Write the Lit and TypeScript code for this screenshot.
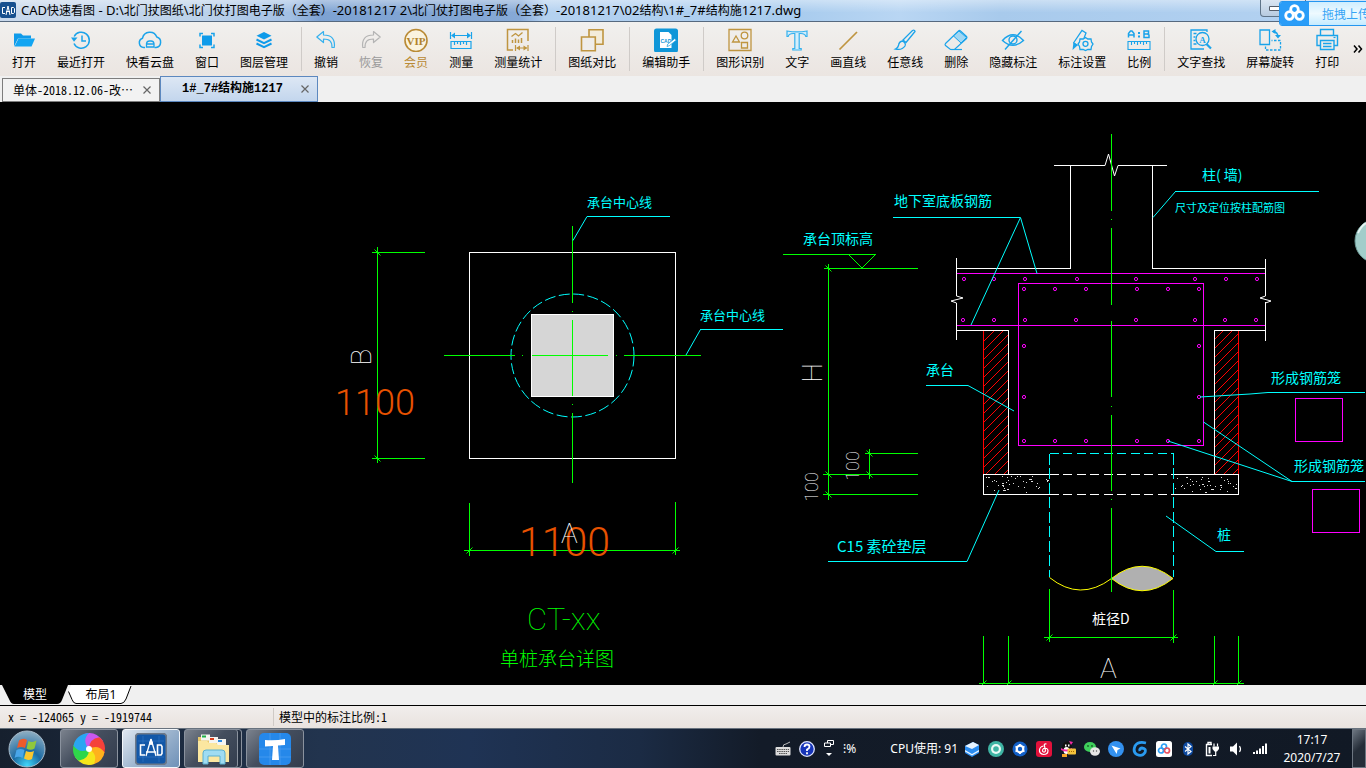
import { LitElement, html, svg, css, TemplateResult, SVGTemplateResult } from "lit";
import { customElement } from "lit/decorators.js";

type Glyph = SVGTemplateResult;

/* ---------- toolbar icons, drawn on a 24 x 24 grid ---------- */
const BLUE = "#1aa3ea";
const GOLD = "#bf9540";

const I: Record<string, Glyph> = {
  open: svg`<path d="M2 5.500h7l2 2h8v3H6l-4 8z" fill="#0f9bea"/><path d="M6.500 10.500H23l-3.500 8H2.500z" fill="#12a5f2"/>`,
  recent: svg`<g fill="none" stroke="${BLUE}" stroke-width="1.500"><path d="M5.200 8.500A8 8 0 1 1 5 15.500"/><path d="M13 7.500v5.500h4"/></g><path d="M2 9.500h6.500L5 13.800z" fill="${BLUE}"/>`,
  cloud: svg`<path d="M7 19.500H5.800A4.800 4.800 0 0 1 4.500 10.200 7.500 7.500 0 0 1 18.800 9 5.400 5.400 0 0 1 18 19.500h-1.500" fill="none" stroke="${BLUE}" stroke-width="1.500"/><path d="M8.500 19v-3.500a3 3 0 0 1 3-2.500h1.500a3 3 0 0 1 3 2.500V19zM8.500 16h7.500" fill="none" stroke="${BLUE}" stroke-width="1.300"/>`,
  window: svg`<rect x="7" y="7.500" width="10" height="10" fill="#0f9bea"/><path d="M5 8.500V5.500h3M16 5.500h3v3M19 16.500v3h-3M8 19.500H5v-3" fill="none" stroke="${BLUE}" stroke-width="1.500"/>`,
  layers: svg`<path d="M12 4l7.500 3.700L12 11.400 4.500 7.700z" fill="#0f9bea"/><path d="M4.500 11.500L12 15.200l7.500-3.700M4.500 15.500L12 19.200l7.500-3.700" fill="none" stroke="#0f9bea" stroke-width="2"/>`,
  undo: svg`<path d="M9.500 3.500L2.800 9l6.700 5.500V11c6 0 8.500 2 8.500 8.500h2.200C21.500 11 17.500 7 9.500 7z" fill="none" stroke="#35b1ee" stroke-width="1.200" stroke-linejoin="round"/>`,
  redo: svg`<path d="M14.500 3.500L21.200 9l-6.700 5.500V11c-6 0-8.500 2-8.500 8.500H3.800C2.500 11 6.500 7 14.500 7z" fill="none" stroke="#b4b4b4" stroke-width="1.200" stroke-linejoin="round"/>`,
  vip: svg`<circle cx="12" cy="12.500" r="11" fill="#faf3df" stroke="#b98a35" stroke-width="1.600"/><text x="12" y="16.500" text-anchor="middle" font-family="Liberation Serif, serif" font-weight="700" font-size="11" fill="#b0822c">VIP</text>`,
  measure: svg`<g fill="none" stroke="${BLUE}" stroke-width="1.200"><path d="M1.500 4v7M22.500 4v7M3 7.500h18"/><path d="M2 13.500h20v7H2zM5.500 14v3M8.500 14v2M11.500 14v3M14.500 14v2M17.500 14v3"/></g><path d="M2 7.500l4-3v6zM22 7.500l-4-3v6z" fill="${BLUE}"/>`,
  stats: svg`<g fill="none" stroke="${GOLD}" stroke-width="1.500"><path d="M22 13V1.500H1.500v20.500H7"/><path d="M5.500 8.500l4-3 3 2.500 4-3.500" stroke-width="1.300"/><path d="M6.500 15v-3M9.500 15v-4.500M12.500 15v-3.500M15.500 15v-5"/><path d="M9.500 17v6M22 17v6M11 20h9.500" stroke-width="1.200"/></g><path d="M10 20l4-2.500v5zM21.500 20l-4-2.500v5z" fill="${GOLD}"/>`,
  compare: svg`<g fill="#f3ecda" stroke="${GOLD}" stroke-width="1.600"><path d="M9 1.800h14v14.400H9z"/><path d="M1.500 9h13.800v13.700H1.500z" fill="#efedea"/></g>`,
  editor: svg`<rect width="24" height="24" y=".5" rx="2.500" fill="#0f96d8"/><path d="M6 4h8.500l3 3v13H6z" fill="#fff"/><text x="6.500" y="14.500" font-family="Liberation Sans, sans-serif" font-weight="700" font-size="5" fill="#0f96d8">CAD</text><path d="M13 18.500l.8-2.500 7-5.500 1.500 1.700-7 5.500z" fill="#fff" stroke="#0f96d8" stroke-width=".7"/>`,
  shapes: svg`<g fill="none" stroke="${GOLD}" stroke-width="1.300"><path d="M1 1.500h22v21H1z"/><path d="M8 8l3.500 6h-7z"/><circle cx="16.500" cy="7.500" r="3.300"/><path d="M13.500 14.500h6v5.500h-6z"/></g>`,
  text: svg`<path d="M2 3q10 1.800 20 0v5.500h-1.200q-.5-3-5-3h-1.600V20.500h2V22H7.800v-1.500h2V5.500H8.200q-4.500 0-5 3H2z" fill="#d4eefb" stroke="#35b1ee" stroke-width="1.200"/>`,
  line: svg`<path d="M3.500 21.500L21 4" stroke="${GOLD}" stroke-width="1.700"/>`,
  brush: svg`<g fill="none" stroke="${BLUE}" stroke-width="1.300"><path d="M10 12L19.500 2.500q2-1 2.500 1L13 14.500z"/><path d="M9.500 13q-3.500.5-4 4.500-.5 2.500-3 3.500 6.500 1.500 9.500-3 1-2-.5-3.500z"/></g>`,
  erase: svg`<path d="M1.500 15.500L14.500 3q1-1 2 0l6 5.500q.8.900 0 2L10.500 21.500h-4L1.500 17.500q-.8-1 0-2z" fill="none" stroke="${BLUE}" stroke-width="1.200"/><path d="M9.500 8l5.500-5 7.500 6.500L17 15z" fill="#9fd7f4" stroke="${BLUE}" stroke-width="1"/><path d="M7 21.500h11" stroke="${BLUE}" stroke-width="1.200"/>`,
  hide: svg`<g fill="none" stroke="${BLUE}" stroke-width="1.400"><path d="M1.500 12.500Q12 1 22.500 12.500 12 22 1.500 12.500z"/><circle cx="12" cy="12" r="4"/><path d="M4 21.500L20.500 3"/></g>`,
  annot: svg`<path d="M3.500 15L12 2.500l4 2.500-2 5M3.500 15l3.800 2.500" fill="none" stroke="${BLUE}" stroke-width="1.300"/><path d="M3.500 14l4.500 3-5.500 5z" fill="${BLUE}"/><g fill="#eeedea" stroke="${BLUE}" stroke-width="1.300"><path d="M15.500 9.500l2.300 1.500h3.200l.5 3 1.500 2-1.500 2.500-.5 3h-3.200l-2.300 1-2.300-1H10l-.5-3L8 16l1.500-2 .5-3h3.200z"/><circle cx="15.500" cy="15.800" r="2.500"/></g>`,
  ratio: svg`<g fill="none" stroke="${BLUE}"><path d="M1.500 9.500V5.500l2-2.500h1.500l2 2.500v4M2 7h5M17 3h4.500v2.500L20.500 6l1.500 1v2.500H17zM17 6h4" stroke-width="1.500"/><path d="M1 13.500h22v8H1zM4.500 14v3M7.500 14v2M10.500 14v3M13.500 14v2M16.500 14v3M19.500 14v2" stroke-width="1.100"/></g><path d="M11 4h2v2h-2zM11 7.500h2v2h-2z" fill="${BLUE}"/>`,
  find: svg`<g fill="none" stroke="${BLUE}" stroke-width="1.300"><path d="M18 4V2H2v19h13M4.500 5.500h3M4.500 9h2M4.500 12.500h2M4.500 16h3"/><circle cx="13.500" cy="11" r="6.500"/></g><path d="M17.500 16l4.500 4.500" stroke="${BLUE}" stroke-width="2.200"/><text x="13.500" y="14.500" text-anchor="middle" font-family="Liberation Serif, serif" font-weight="700" font-size="9" fill="${BLUE}">A</text>`,
  rotate: svg`<g fill="none" stroke="${BLUE}" stroke-width="1.300"><path d="M2 2h9.500v14.500H2z"/><path d="M7.500 18.500v3.500H22.500V12.500h-9" stroke-dasharray="2.500 1.500"/><path d="M15 3.500q5 .5 5 5.500" /></g><path d="M13.500 3.500l4-2.500v5zM17 7h6l-3 3.500z" fill="${BLUE}"/>`,
  print: svg`<g fill="none" stroke="${BLUE}" stroke-width="1.400"><path d="M5.500 7V1.500h13V7"/><path d="M5.500 17.500H2V7.500h20.500v10H19"/><path d="M5.500 12.500h13.500v9H5.500zM8 15.500h8.500M8 18.500h8.500" fill="#eeedea"/></g><path d="M18.500 9.500h2" stroke="${BLUE}" stroke-width="1.200"/>`,
};

type Tool = [string, string] | "|";
const TOOLS: Tool[] = [
  ["open", "打开"], ["recent", "最近打开"], ["cloud", "快看云盘"], ["window", "窗口"], ["layers", "图层管理"], "|",
  ["undo", "撤销"], ["redo", "恢复"], ["vip", "会员"], ["measure", "测量"], ["stats", "测量统计"], "|",
  ["compare", "图纸对比"], "|",
  ["editor", "编辑助手"], "|",
  ["shapes", "图形识别"], ["text", "文字"], ["line", "画直线"], ["brush", "任意线"], ["erase", "删除"], ["hide", "隐藏标注"], ["annot", "标注设置"], ["ratio", "比例"], "|",
  ["find", "文字查找"], ["rotate", "屏幕旋转"], ["print", "打印"],
];

const icon = (name: string, size = 24): TemplateResult =>
  html`<svg width=${size} height=${size} viewBox="0 0 24 24" aria-hidden="true">${I[name]}</svg>`;

const TITLE = "CAD快速看图 - D:\\北门扙图纸\\北门仗打图电子版（全套）-20181217 2\\北门仗打图电子版（全套）-20181217\\02结构\\1#_7#结构施1217.dwg";

/* Latin runs are set one size up from the Chinese around them. */
const mixed = (s: string) =>
  s.split(/([\x20-\x7e]+)/).map((run) => (/^[\x20-\x7e]/.test(run) ? html`<span class="latin">${run}</span>` : run));

/* ---------- the drawing ---------- */
@customElement("cad-sheet")
export class CadSheet extends LitElement {
  static styles = css`
    :host { display: block; flex: 1; min-height: 0; background: #000; overflow: hidden; }
    svg { display: block; width: 100%; height: 100%; }
    .ln { fill: none; shape-rendering: crispEdges; stroke-width: 1; }
    .soft { fill: none; stroke-width: 1; }
    .plate { fill: #d6d6d6; }
    .cut { fill: #b0b0b0; }
    .g { stroke: #0f0; } .c { stroke: #0ff; } .w { stroke: #fff; } .m { stroke: #f0f; } .r { stroke: #f00; } .y { stroke: #ff0; }
    text { font-family: "Noto Sans CJK SC", sans-serif; font-weight: 400; }
    .tc { fill: #0ff; } .tg { fill: #0f0; } .tw { fill: #fff; } .to { fill: #e85200; }
    .thin { font-family: Roboto, "Noto Sans CJK SC", sans-serif; font-weight: 100; }
    .light { font-family: Roboto, "Noto Sans CJK SC", sans-serif; font-weight: 300; }
    .s11 { font-size: 11px; } .s13 { font-size: 13px; } .s14 { font-size: 14px; } .s15 { font-size: 15px; } .s18 { font-size: 18px; }
    .s19 { font-size: 19px; font-weight: 300; } .s28 { font-size: 28px; } .s31 { font-size: 31px; } .s36 { font-size: 36px; } .s41 { font-size: 41px; }
  `;

  private t(x: number, y: number, cls: string, s: string) {
    return svg`<text x=${x} y=${y} class=${cls}>${s}</text>`;
  }
  private v(x: number, y: number, cls: string, s: string) {
    return svg`<text x="0" y="0" text-anchor="middle" class=${cls} transform=${`translate(${x} ${y}) rotate(-90)`}>${s}</text>`;
  }
  private ticks(points: number[][], dir: number) {
    return points.map(([x, y]) => svg`<path class="soft g" d=${`M${x - 3} ${y + 3 * dir}L${x + 3} ${y - 3 * dir}`}/>`);
  }
  private hatch(x: number) {
    const out = [];
    for (let y = 341; y < 505; y += 9) out.push(svg`<path d=${`M${x} ${y}l32 -32`}/>`);
    return out;
  }
  private bars() {
    const rows: [number, number[]][] = [
      [279, [964, 994, 1025, 1077, 1136, 1195, 1226, 1257]],
      [289, [1024, 1055, 1086, 1137, 1168, 1199]],
      [320, [963, 994, 1025, 1076, 1136, 1195, 1225, 1256]],
      [346, [1024, 1199]],
      [397, [1024, 1199]],
      [441, [1024, 1055, 1086, 1137, 1168, 1199]],
    ];
    return rows.map(([y, xs]) => xs.map((x) => svg`<circle cx=${x} cy=${y} r="1.600"/>`));
  }
  private gravel(x0: number) {
    const out = [];
    let seed = x0;
    const next = (n: number) => {
      seed = (seed * 1103 + 12345) % 65521;
      return seed % n;
    };
    for (let i = 0; i < 42; i++) {
      out.push(svg`<rect x=${x0 + next(62)} y=${476 + next(17)} width=${i % 6 === 0 ? 2 : 1} height="1"/>`);
    }
    return out;
  }

  render() {
    return html`<svg viewBox="0 102 1366 583" preserveAspectRatio="xMinYMin slice" role="img" aria-label="单桩承台详图">
      <defs>
        <clipPath id="wl"><rect x="984" y="331" width="24" height="143"/></clipPath>
        <clipPath id="wr"><rect x="1215" y="331" width="23" height="143"/></clipPath>
      </defs>

      <rect x="531.500" y="314.500" width="82" height="82" class="ln w plate"/>
      <path class="ln w" d="M469.500 252.500H675.500V458.500H469.500z"/>
      <circle class="soft c" cx="572.500" cy="355.500" r="61.500" stroke-dasharray="11 3.500"/>
      <path class="ln g" d="M572.500 226V303M572.500 311v1M572.500 320V396M572.500 404v1M572.500 413V483
        M444 355.500H515M522 355.500h1M532 355.500H608M616 355.500h1M624 355.500H701
        M377.500 247V463M372 252.500H425M372 458.500H425
        M464 550.500H680M469.500 503V556M675.500 502V555"/>
      ${this.ticks([[377.5, 252.5], [377.5, 458.5]], -1)}
      ${this.ticks([[469.5, 550.5], [675.5, 550.5]], 1)}
      <path class="ln c" d="M587 216.500H670M700 329.500H783"/>
      <path class="soft c" d="M573 240.500L587 216.500M686 355L700.500 329.500"/>
      ${this.t(587, 207, "tc s13", "承台中心线")}
      ${this.t(700, 320, "tc s13", "承台中心线")}
      ${this.v(371, 357, "tw s28 thin", "B")}
      ${this.t(335, 415, "to s36 light", "1100")}
      ${this.t(519, 556, "to s41 light", "1100")}
      ${this.t(561, 543, "tw s28 thin", "A")}
      ${this.t(527, 630, "tg s31 thin", "CT-xx")}
      ${this.t(500, 666, "tg s19", "单桩承台详图")}

      <path class="ln g" d="M783 254.500H876M824 268.500H918M828.500 264V500M823 474.500H918M823 494.500H918M869.500 449V479M865 453.500H918
        M1044 637.500H1178M1049.500 589V642M1173.500 590V643M979 683.500H1244M983.500 636V684M1008.500 636V684M1214.500 636V684M1238.500 636V684"/>
      <path class="soft g" d="M848.500 254.500L862 268L875.500 254.500"/>
      ${this.ticks([[828.5, 268.5], [828.5, 474.5], [828.5, 494.5], [869.5, 453.5], [869.5, 474.5]], -1)}
      ${this.ticks([[1049.5, 637.5], [1173.5, 637.5], [983.5, 683.5], [1008.5, 683.5], [1214.5, 683.5], [1238.5, 683.5]], 1)}

      <g clip-path="url(#wl)" class="soft r">${this.hatch(984)}</g>
      <g clip-path="url(#wr)" class="soft r">${this.hatch(1213)}</g>
      <path class="ln r" d="M983.500 331V474M1238.500 331V474"/>

      <path class="ln m" d="M957 273.500H1265M957 325.500H1265M1018.500 283.500H1203.500V445.500H1018.500z
        M1295.500 398.500H1342.500V441.500H1295.500zM1312.500 489.500H1359.500V532.500H1312.500z"/>
      <g class="soft m">${this.bars()}</g>

      <path class="ln w" d="M1054 165.500H1105M1118 165.500H1167M1070.500 165V268.500H956M1152.500 165V268.500H1265
        M956.500 258V296M956.500 303V340M1265.500 259V296M1265.500 302V341M956 330.500H1008.500V474M1265 330.500H1214.500V474
        M1059 474.500H983.500V494.500H1059M1173 474.500H1238.500V494.500H1173"/>
      <path class="ln w" stroke-dasharray="9 4.500" d="M1063 474.500H1173M1063 494.500H1173"/>
      <path class="soft w" d="M1105 165.500L1108.500 154L1114.500 176L1118 165.500M956.500 296L963 298L951 301L956.500 303M1265.500 296L1260 298L1271 301L1265.500 303"/>
      <g fill="#ddd">${this.gravel(986)}${this.gravel(1175)}</g>

      <path class="ln c" stroke-dasharray="9 4.500" d="M1049.500 453.500H1173.500"/>
      <path class="ln c" stroke-dasharray="11 3.500" d="M1049.500 453.500V577M1173.500 453.500V577"/>
      <path class="soft y cut" d="M1111.500 578.500Q1142 554 1173 578.500Q1142 603 1111.500 578.500z"/>
      <path class="soft y" d="M1049.500 577.500Q1080 602 1111.500 578.500"/>
      <path class="ln g" d="M1111.500 134V211M1111.500 219v1M1111.500 228V305M1111.500 321V397M1111.500 406v1M1111.500 415V491M1111.500 499v1M1111.500 508V592"/>

      <path class="ln c" d="M893 217.500H1020M1175 191.500H1319M926 385.500H968M828 561.500H967M1268 392.500H1365M1292 481.500H1365M1216 551.500H1244"/>
      <path class="soft c" d="M971 325L1020.500 217.500L1037 273.500M1153 217.500L1175.500 191.500M968 385.500L1014 411M967 561.500L999 490
        M1200 397L1250 394L1268 392.500M1203.500 422L1292 481.500L1168 441M1166 516L1216 551.500"/>

      ${this.t(803, 244, "tc s14", "承台顶标高")}
      ${this.t(894, 206, "tc s14", "地下室底板钢筋")}
      ${this.t(1202, 180, "tc s14", "柱( 墙)")}
      ${this.t(1175, 212, "tc s11", "尺寸及定位按柱配筋图")}
      ${this.t(926, 375, "tc s14", "承台")}
      ${this.t(837, 552, "tc s15", "C15 素砼垫层")}
      ${this.t(1271, 383, "tc s14", "形成钢筋笼")}
      ${this.t(1294, 471, "tc s14", "形成钢筋笼")}
      ${this.t(1217, 540, "tc s14", "桩")}
      ${this.t(1092, 624, "tw s14", "桩径D")}
      ${this.t(1100, 678, "tw s28 thin", "A")}
      ${this.v(822, 373, "tw s28 thin", "H")}
      ${this.v(818, 487, "tw s18 thin", "100")}
      ${this.v(859, 466, "tw s18 thin", "100")}

      <circle cx="1377" cy="241" r="22" fill="#a2cdca" stroke="#6f9c98"/>
      <path d="M1358 233q3-7 8-10" fill="none" stroke="#e4f3f1" stroke-width="2"/>
    </svg>`;
  }
}

/* ---------- taskbar ---------- */
const TRAY: [string, Glyph][] = [
  ["图层", svg`<path d="M1 5l8-4 6 3v8l-7 4-7-4z" fill="#2a8cf0"/><path d="M1 5l8-4 6 3-7 4zM1 9l7 4 7-4v1.500l-7 4-7-4z" fill="#e8f4ff"/>`],
  ["护眼", svg`<circle cx="8" cy="8" r="8" fill="#3fb5a4"/><circle cx="8" cy="8" r="5" fill="#eafaf6"/><circle cx="8" cy="8" r="2.800" fill="#3fb5a4"/>`],
  ["设置", svg`<circle cx="8" cy="8" r="7.500" fill="#1260c8"/><circle cx="8" cy="8" r="3.300" fill="none" stroke="#fff" stroke-width="2.200"/><path d="M8 3v2M8 11v2M3.500 5.500l2 1M10.500 9.500l2 1M3.500 10.500l2-1M10.500 6.500l2-1" stroke="#fff" stroke-width="1.800"/>`],
  ["音乐", svg`<rect width="16" height="16" rx="3" fill="#e2113b"/><path d="M10.500 3q-3-.5-2 2l1 4.500q-.5 2-2 1.500-2-1 0-3.500 4-1 4.500 2 0 4-4.500 4-4.500-1-4-4.500.5-3.500 4-4" fill="none" stroke="#fff" stroke-width="1.200"/>`],
  ["企鹅", svg`<ellipse cx="7" cy="7" rx="5" ry="6.500" fill="#111"/><path d="M5 3.500h1.500v2H5zM8 3.500h1.500v2H8z" fill="#fff"/><ellipse cx="6.500" cy="9.500" rx="3" ry="3.500" fill="#fff"/><path d="M1 7q5 3 11 0v2q-5 3-11 0zM9 0l4 1-2 3z" fill="#f22aa5"/><path d="M2 13h5v3H2z" fill="#f5a623"/><rect x="7.500" y="7.500" width="8.500" height="6" rx="1" fill="#f4c33c"/><path d="M9 10.500h5" stroke="#a86a00" stroke-dasharray="1 1"/>`],
  ["微信", svg`<ellipse cx="6" cy="6" rx="6" ry="5" fill="#3fd05c"/><ellipse cx="11" cy="10.500" rx="5" ry="4.200" fill="#e6e6e6"/><circle cx="4" cy="5" r=".9" fill="#1b5e2a"/><circle cx="8" cy="5" r=".9" fill="#1b5e2a"/><circle cx="9.500" cy="10" r=".7" fill="#555"/><circle cx="12.500" cy="10" r=".7" fill="#555"/>`],
  ["钉钉", svg`<circle cx="8" cy="8" r="8" fill="#3391f0"/><path d="M3.500 4.500l9 3-3 1.500-.8 4z" fill="#fff"/>`],
  ["加速", svg`<path d="M14 2Q6 0 3 5q-2.500 6 2 8.500 5 2.500 8-2 1.500-4-3-4.500-3 .5-2 3" fill="none" stroke="#2a9bf0" stroke-width="2.800"/>`],
  ["网盘", svg`<rect width="16" height="16" rx="2.500" fill="#fff"/><g fill="none" stroke="#2b9ff5" stroke-width="1.700"><circle cx="8" cy="5.500" r="2.500"/><circle cx="5" cy="9.500" r="2.500"/><circle cx="11" cy="9.500" r="2.500" stroke="#e9505f"/></g>`],
  ["蓝牙", svg`<rect x="3" y="1" width="10" height="14" rx="5" fill="#0e4aa0"/><path d="M5 5.500l6 5L8 13V3l3 2.500-6 5" fill="none" stroke="#fff" stroke-width="1.200"/>`],
  ["电源", svg`<path d="M4 3.500v-2h3v2M8 3.500H2.500v11H8" fill="none" stroke="#fff" stroke-width="1.400"/><path d="M4.500 6h2v6.500h-2z" fill="#fff"/><path d="M8.500 5.500h6.500v2.500l-2 2.500h-2.500l-2-2.500z" fill="#fff"/><path d="M10 2.500v3M13.500 2.500v3M11.700 10v4.500H9" fill="none" stroke="#fff" stroke-width="1.200"/>`],
  ["音量", svg`<path d="M2 5.500h3l4-4v13l-4-4H2z" fill="#fff"/><path d="M11.500 5q2 3 0 6" fill="none" stroke="#fff" stroke-width="1.200"/>`],
  ["网络", svg`<path d="M1 11h2v2H1zM4 9.500h2V13H4zM7 7.500h2V13H7zM10 5h2v8h-2zM13 2.500h2V13h-2z" fill="#fff"/>`],
];

@customElement("task-bar")
export class TaskBar extends LitElement {
  static styles = css`
    :host { display: flex; align-items: stretch; height: 40px; box-sizing: border-box; overflow: hidden;
      border-top: 1px solid #68727e; color: #fff; font: 12px/18px "Noto Sans", "Noto Sans CJK SC", sans-serif;
      background: linear-gradient(90deg, #16202e 0, #22344e 320px, #1f3354 470px, #1b2b44 640px, #131b28 760px, #111925 100%); }
    button { font: inherit; color: inherit; background: none; border: 0; margin: 0; padding: 0; display: grid; place-items: center; }
    svg { display: block; }
    .start { width: 54px; margin-right: 6px; }
    .app { width: 58px; margin-right: 4px; box-sizing: border-box; border: 1px solid #8a929e; border-radius: 3px;
      background: linear-gradient(135deg, #7b828d, #444e5e 45%, #323c4d); }
    .app.on { border-color: #f2f6fa; background: linear-gradient(135deg, #dfe8f2, #9fb6cf 50%, #6f91b8); }
    .app.many { box-shadow: inset -3px 0 0 #232e3f, inset -4px 0 0 #8a929e; }
    .space { flex: 1; }
    .lang { display: flex; align-items: center; gap: 8px; margin-right: 34px; }
    .tray { display: flex; align-items: center; }
    .tray button { width: 24px; }
    .cpu { margin-right: 2px; white-space: nowrap; }
    .clock { width: 78px; text-align: center; align-self: center; margin: 0 1px; }
    .desk { width: 14px; border: 1px solid #6d7681; background: linear-gradient(135deg, #6d7681, #252d38 50%); }
  `;

  render() {
    return html`
      <button class="start" aria-label="开始">
        <svg width="38" height="38" viewBox="0 0 38 38">
          <defs><radialGradient id="orb" cx=".5" cy=".95" r=".9"><stop offset="0" stop-color="#3fd6fa"/><stop offset=".45" stop-color="#1c6ba3"/><stop offset="1" stop-color="#86a9c0"/></radialGradient></defs>
          <circle cx="19" cy="19" r="18" fill="url(#orb)" stroke="#a9bccb"/>
          <path d="M11 10.500q4-3 8-.5l-2 8q-4-2-8 0z" fill="#ee5b2b"/><path d="M20.500 11q4 2 8-.5l-2 8q-4 2.500-8 0z" fill="#8fc73d"/>
          <path d="M8.500 20q4-2 8 0l-2 8q-4-2.500-8 0z" fill="#49a6e9"/><path d="M18 21q4 2 8 0l-2 8q-4 2-8-.5z" fill="#fbc72e"/>
        </svg>
      </button>
      <button class="app" aria-label="浏览器">
        <svg width="34" height="34" viewBox="-17 -17 34 34">
          ${["#c957f0", "#f5413a", "#ffb21c", "#f5e61b", "#2fd64a", "#2aa5f2"].map(
            (c, i) => svg`<path fill=${c} transform=${`rotate(${i * 60})`} d="M0 0Q-9 -5 -5 -15Q6 -19 14 -8Q4 -11 0 0z"/>`)}
          <circle r="3" fill="#fff"/>
        </svg>
      </button>
      <button class="app on" aria-label="CAD快速看图">
        <svg width="32" height="32" viewBox="0 0 32 32">
          <rect x=".5" y=".5" width="31" height="31" rx="4" fill="#1358a8" stroke="#6c7888" stroke-width="2"/>
          <path d="M3 8h26M3 24h26M8 3v26M24 3v26" stroke="#3479c6" stroke-width=".6"/>
          <path d="M16 6l-5 17M16 6l5 17M11 19h10" stroke="#fff" stroke-width="1.300" fill="none"/>
          <path d="M10 12H5.500v10H10M22.500 12H26l1 1.500v7L26 22h-3.500z" stroke="#fff" stroke-width="1.600" fill="none"/><circle cx="16" cy="10" r="2" fill="#fff"/>
        </svg>
      </button>
      <button class="app many" aria-label="资源管理器">
        <svg width="34" height="32" viewBox="0 0 34 32">
          <path d="M2 4h7l2 3h18v22H2z" fill="#e9c96a"/><path d="M5 1.500h9v6H5z" fill="#f5f5f0"/><path d="M6 2.500h4v2H6z" fill="#1fb046"/>
          <path d="M13 4h9v6h-9z" fill="#f5f5f0"/><path d="M14 5h4v2h-4z" fill="#d9411e"/><path d="M21 6h9v6h-9z" fill="#f5f5f0"/><path d="M22 7h4v2h-4z" fill="#2c8be0"/>
          <path d="M2 8h9l2 2h7l2 2h11v17H2z" fill="#fbe7a0"/>
          <path d="M7 31V20q0-3 3-3h16q3 0 3 3v11h-5v-8H12v8z" fill="#9fdcf2" stroke="#5ab0d0"/>
        </svg>
      </button>
      <button class="app" aria-label="天正">
        <svg width="32" height="32" viewBox="0 0 32 32">
          <rect width="32" height="32" rx="5" fill="#2588ea"/><path d="M0 16h32M11 0v32M21 0v32M0 24h32" stroke="#4ea2f2" stroke-width=".7"/>
          <path d="M6 7q10 1 20-1v6q-4 0-7 .5l1 14.500h-7l1-14-8 .5z" fill="#fff"/>
        </svg>
      </button>
      <div class="space"></div>
      <div class="lang">
        <svg width="16" height="16" viewBox="0 0 16 16"><path d="M8 6q0-3 3-3l4-2" fill="none" stroke="#bbb"/><rect x=".5" y="6" width="15" height="8.500" rx="1" fill="#ddd"/><path d="M2 8.500h12M2 10.500h12M4 12.500h8" stroke="#555" stroke-dasharray="1.500 .7"/></svg>
        <svg width="16" height="16" viewBox="0 0 16 16"><circle cx="8" cy="8" r="7.300" fill="#1634b8" stroke="#dfe5ff" stroke-width="1.300"/><path d="M5.500 6q0-2.500 2.500-2.500t2.500 2.300Q10.500 7.500 8 8.500v1.500M8 11.200v2" fill="none" stroke="#fff" stroke-width="1.800"/></svg>
        <svg width="12" height="20" viewBox="0 0 12 20"><path d="M4.500 4V1.500h6v4h-3M1.500 4h6v3.500h-6z" fill="none" stroke="#fff"/><path d="M3 14h6l-3 3z" fill="#fff"/></svg>
        <span>⁝%</span>
      </div>
      <span class="tray"><span class="cpu">CPU使用: 91</span>
        ${TRAY.map(([label, g]) => html`<button aria-label=${label}><svg width="16" height="16" viewBox="0 0 16 16">${g}</svg></button>`)}
      </span>
      <div class="clock">17:17<br>2020/7/27</div>
      <button class="desk" aria-label="显示桌面"></button>
    `;
  }
}

@customElement("app-root")
export class AppRoot extends LitElement {
  static styles = css`
    :host { display: flex; flex-direction: column; height: 100vh; overflow: hidden; position: relative; background: #f0f0f0; color: #000;
      font: 12px/18px "Noto Sans Mono CJK SC", "Noto Sans CJK SC", sans-serif; }
    button { font: inherit; color: inherit; background: none; border: 0; margin: 0; padding: 0; }
    svg { display: block; }

    .title { display: flex; align-items: center; gap: 4px; height: 21px; flex: none; border-bottom: 1px solid #56697f;
      white-space: nowrap; font-family: "Noto Sans", "Noto Sans CJK SC", sans-serif;
      background: linear-gradient(180deg, #ffffff66, #ffffff00 60%), linear-gradient(90deg, #c9d9ec 0, #bcd2ea 200px, #a3c0e4 290px, #7da2d2 320px, #86a9d6 520px, #b4d1f0 545px, #a9ccee 800px, #b9d6f3 900px, #a8caec 1000px, #b5d3f2 100%); }
    .title h1 { font: inherit; margin: 0; }
    .latin { font-size: 13px; }
    .min { position: absolute; top: 0; right: 60px; width: 46px; height: 17px; border: 1px solid #5f7488; border-top: 0; border-radius: 0 0 4px 4px;
      background: linear-gradient(#dbe6f2, #b7cbe0); display: grid; align-items: center; padding-left: 8px; box-sizing: border-box; }
    .upload { position: absolute; top: 1px; right: -12px; height: 25px; width: 99px; box-sizing: border-box; display: flex; align-items: center;
      border: 1px solid #2496f0; border-radius: 3px; background: linear-gradient(#cfeeff, #eefaff 50%, #c5ebff); color: #36a4f5; white-space: nowrap; overflow: hidden; }
    .upload svg { background: #2a9df8; margin-right: 13px; flex: none; }

    .tools { display: flex; gap: 1px; height: 54px; flex: none; padding-left: 2px; box-sizing: border-box; background: linear-gradient(#f1f0ee, #ebe5e1); overflow: hidden; font-family: "Noto Sans CJK SC", sans-serif; }
    .tool { display: flex; flex-direction: column; align-items: center; flex: none; padding: 6px 10px 0; gap: 1px; white-space: nowrap; }
    .tool.redo { color: #9a9a9a; }
    .tool.vip { color: #b98a35; }
    .sep { width: 1px; flex: none; margin: 5px 1px 5px 2px; background: #cfcbc8; }
    .more { margin-left: auto; padding-right: 3px; }

    .tabs { display: flex; align-items: flex-end; height: 26px; padding-left: 2px; flex: none; }
    .tab { display: flex; align-items: center; box-sizing: border-box; width: 158px; height: 24px; border: 1px solid #7d7d7d; padding: 0 7px 0 10px; background: #f2f2f2; }
    .tab .name { flex: 1; text-align: left; white-space: nowrap; }
    .tab.on { height: 26px; padding-left: 4px; border-color: #5c88bf; background: linear-gradient(#dde7f4, #c3d6ed); font-weight: 700; font-family: "Liberation Mono", "Noto Sans CJK SC", monospace; }
    .tab.on .name { text-align: center; }

    .sheets { display: flex; height: 20px; padding-left: 2px; border-bottom: 1px solid #000; flex: none; font-family: "Noto Sans", "Noto Sans CJK SC", sans-serif; }
    .sheet { display: grid; place-items: center; width: 66px; }
    .sheet > * { grid-area: 1 / 1; }
    .sheet.on { color: #fff; }
    .status { display: flex; align-items: center; height: 22px; flex: none; background: linear-gradient(#f1eeec, #e9e3df); }
    .pos { width: 274px; box-sizing: border-box; padding-left: 8px; border-right: 1px solid #cfcac6; white-space: pre; }
    .scale { padding-left: 5px; }
  `;

  private close() {
    return html`<button class="close" aria-label="关闭"><svg width="10" height="10" viewBox="0 0 10 10"><path d="M1.500 1.500l7 7M8.500 1.500l-7 7" stroke="#666" stroke-width="1.200"/></svg></button>`;
  }

  render() {
    return html`
      <header class="title">
        <svg width="17" height="17" viewBox="0 0 17 17" aria-hidden="true"><rect width="16" height="16" rx="2" fill="#17508f"/><path d="M5 5.500H2.500v6H5M8 4l-2 9M8 4l2 9M6 9.500h4M11.500 5.500h2l1 1v4l-1 1h-2z" fill="none" stroke="#fff"/></svg>
        <h1>${mixed(TITLE)}</h1>
      </header>
      <button class="min" aria-label="最小化"><svg width="12" height="5" viewBox="0 0 12 5"><path d="M.5 .5h11v4H.5z" fill="#fff" stroke="#555e6b"/></svg></button>
      <button class="upload"><svg width="29" height="25" viewBox="0 0 29 25"><g fill="none" stroke="#fff" stroke-width="2.800"><circle cx="14.500" cy="8.500" r="3.800"/><circle cx="9.500" cy="14.500" r="3.800"/><circle cx="19.500" cy="14.500" r="3.800"/></g></svg>拖拽上传</button>

      <nav class="tools" aria-label="工具栏">
        ${TOOLS.map((t) => t === "|" ? html`<span class="sep"></span>` : html`<button class="tool ${t[0]}">${icon(t[0])}<span>${t[1]}</span></button>`)}
        <button class="more" aria-label="更多"><svg width="10" height="10" viewBox="0 0 10 10"><path d="M1 1.500L4 5 1 8.500M5.500 1.500l3 3.500-3 3.500" fill="none" stroke="#000" stroke-width="1.500"/></svg></button>
      </nav>

      <div class="tabs">
        <div class="tab"><button class="name">单体-2018.12.06-改⋯</button>${this.close()}</div>
        <div class="tab on"><button class="name">1#_7#结构施1217</button>${this.close()}</div>
      </div>

      <cad-sheet></cad-sheet>

      <div class="sheets">
        <button class="sheet on"><svg width="66" height="20" viewBox="0 0 66 20"><path d="M0 0h66l-6 15q-1.500 4-5 4H12q-3 0-4.500-4z"/></svg><span>模型</span></button>
        <button class="sheet"><svg width="66" height="20" viewBox="0 0 66 20"><path d="M63 1l-5 13q-2 4.500-5 4.500H8q-2.500 0-4-4L.5 6.500 3 0h60" fill="#fff"/><path d="M63 1l-5 13q-2 4.500-5 4.500H8q-2.500 0-4-4L.5 6.500" fill="none" stroke="#000"/></svg><span>布局1</span></button>
      </div>
      <footer class="status"><span class="pos">x = -124065 y = -1919744</span><span class="scale">模型中的标注比例:1</span></footer>
      <task-bar></task-bar>
    `;
  }
}
